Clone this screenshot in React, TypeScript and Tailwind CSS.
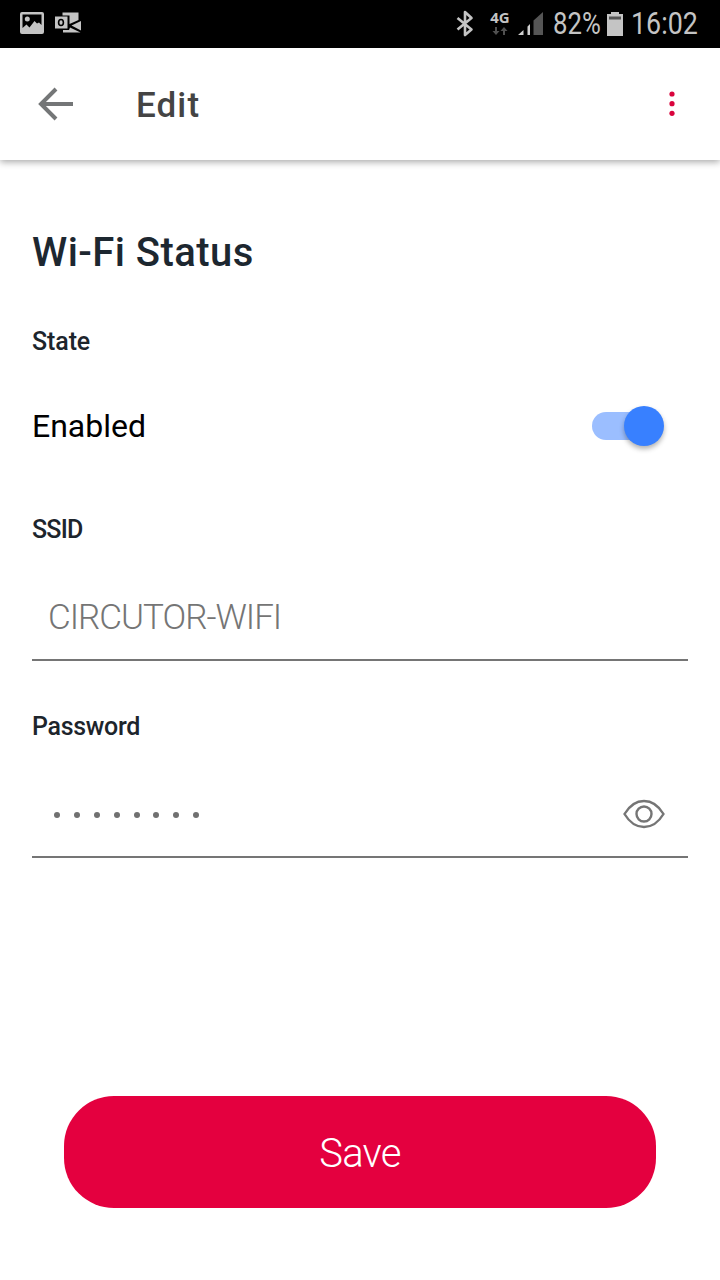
import { FC, ReactNode } from "react";

const PASSWORD_LENGTH = 8;

const StatusBar: FC = () => (
	<div className="flex h-12 items-center bg-black pl-5 text-[#c4c4c4]">
		<svg className="h-6 w-6" viewBox="0 0 24 24" fill="currentColor">
			<path
				fillRule="evenodd"
				d="M2 0H22Q24 0 24 2V20Q24 22 22 22H2Q0 22 0 20V2Q0 0 2 0ZM2.5 2.5V16L6.5 12.5L9.5 15.5L14.5 9L17 11.5L19 10.5L21.5 13V2.5Z"
			/>
			<circle cx="7.3" cy="7" r="2.5" />
		</svg>
		<svg className="ml-[11px] h-6 w-[27px]" viewBox="0 0 27 24" fill="currentColor">
			<path d="M7.5 .5H23.5V8L14.5 12V3.5H7.5Z" />
			<path d="M16.5 13.5L26 9V18.5Z" />
			<path d="M8 18H14L15 15.5L25.5 20.5H8Z" />
			<path d="M0 4.5H12.5V16.5H0Z" />
			<ellipse cx="6" cy="10.5" rx="2.4" ry="3" fill="none" stroke="#000" strokeWidth="1.6" />
		</svg>
		<svg
			className="ml-[374px] h-7 w-[18px]"
			viewBox="0 0 18 28"
			fill="none"
			stroke="currentColor"
			strokeWidth="2.6"
			strokeLinejoin="round"
		>
			<path d="M1.5 8L15.5 19.5L9 25V2L15.5 8L1.5 19.5" />
		</svg>
		<div className="mb-1 ml-3.5 flex w-6 flex-col items-center">
			<span className="font-['Open_Sans',sans-serif] text-[15px] leading-4 font-bold">4G</span>
			<svg className="mt-0.5 h-2 w-4" viewBox="0 0 16 8" fill="#505050">
				<path d="M3 0H5V4H7.5L4 8L.5 4H3Z" />
				<path d="M11 8H13V4H15.5L12 0L8.5 4H11Z" />
			</svg>
		</div>
		<svg className="ml-1.5 h-6 w-[26px]" viewBox="0 0 26 24">
			<path d="M0 23L5.5 18V23ZM9.5 14.5L12 12V23H9.5Z" fill="#d0d0d0" />
			<path d="M15.5 8.5L25 0V23H15.5Z" fill="#555" />
		</svg>
		<span className="ml-[9px] w-[49px] origin-left scale-x-[0.83] font-[Roboto] text-[31px] whitespace-nowrap">82%</span>
		<svg className="ml-[5px] h-6 w-4" viewBox="0 0 16 24" fill="currentColor">
			<path d="M4 0H12V2H16V24H0V2H4Z" />
			<path d="M2 4.5H14V7.5H2Z" fill="#555" />
		</svg>
		<span className="ml-2 w-[70px] origin-left scale-x-[0.865] font-[Roboto] text-[31px] whitespace-nowrap">16:02</span>
	</div>
);

const Header: FC = () => (
	<header className="flex h-28 items-center bg-white pr-[45px] pl-[38px] shadow-[0_2px_7px_rgba(0,0,0,0.35)]">
		<svg className="h-9 w-9" viewBox="0 0 36 36" fill="none" stroke="#747677" strokeWidth="4">
			<path d="M18 3L3 18L18 33M3 18H35" />
		</svg>
		<h1 className="ml-[62px] pt-1 text-[35px] font-medium tracking-[1.1px] text-[#444]">Edit</h1>
		<svg className="ml-auto h-7 w-1.5" viewBox="0 0 6 28" fill="#d9043d">
			<circle cx="3" cy="4" r="2.6" />
			<circle cx="3" cy="13.7" r="2.6" />
			<circle cx="3" cy="23.3" r="2.6" />
		</svg>
	</header>
);

const Label: FC<{ children: ReactNode; className: string }> = ({ children, className }) => (
	<div className={`h-10 text-[25px] leading-[42px] font-medium text-[#1d252c] ${className}`}>{children}</div>
);

const Field: FC<{ children: ReactNode }> = ({ children }) => (
	<div className="mt-6 flex h-[88px] items-center border-b-2 border-[#757575] px-4 text-[#757575]">{children}</div>
);

const App: FC = () => (
	<div className="flex h-[1280px] w-[720px] flex-col overflow-hidden bg-white font-[Roboto,sans-serif]">
		<StatusBar />
		<Header />
		<main className="flex flex-col px-8 pt-[68px]">
			<h2 className="h-12 text-[40px] leading-[50px] font-medium tracking-[0.45px] text-[#1d2730]">Wi-Fi Status</h2>

			<Label className="mt-[45px] tracking-[-0.1px]">State</Label>
			<div className="mt-[29px] flex h-[72px] items-center justify-between pr-6">
				<span className="text-[32px] text-black">Enabled</span>
				<button
					type="button"
					role="switch"
					aria-checked="true"
					aria-label="Enabled"
					className="flex h-7 w-[72px] items-center justify-end rounded-full bg-linear-to-r from-[#9bbeff] from-80% to-transparent to-80%"
				>
					<span className="h-10 w-10 shrink-0 rounded-full bg-[#3880ff] shadow-[0_3px_5px_rgba(0,0,0,0.3)]" />
				</button>
			</div>

			<Label className="mt-[47px] tracking-[-0.8px]">SSID</Label>
			<Field>
				<span className="pt-1 text-[35px] font-light tracking-[-1px]">CIRCUTOR-WIFI</span>
			</Field>

			<Label className="mt-[45px] tracking-[-0.3px]">Password</Label>
			<Field>
				<div className="flex gap-[13.9px] pt-1 pl-1.5">
					{Array.from({ length: PASSWORD_LENGTH }, (_, i) => (
						<span key={i} className="h-1.5 w-1.5 rounded-full bg-[#707070]" />
					))}
				</div>
				<svg
					className="mt-0.5 mr-[7.5px] ml-auto h-[30px] w-[42px]"
					viewBox="0 0 42 30"
					fill="none"
					stroke="currentColor"
					strokeWidth="2.4"
				>
					<path d="M1.5 15C6 7.5 13 2 21 2S36 7.5 40.5 15C36 22.5 29 28 21 28S6 22.5 1.5 15Z" />
					<circle cx="21" cy="15" r="7.5" />
				</svg>
			</Field>

			<button
				type="button"
				className="mx-8 mt-[238px] h-28 rounded-[50px] bg-[#e4003f] pt-1 text-[40px] font-light tracking-[-0.7px] text-white"
			>
				Save
			</button>
		</main>
	</div>
);

export default App;
